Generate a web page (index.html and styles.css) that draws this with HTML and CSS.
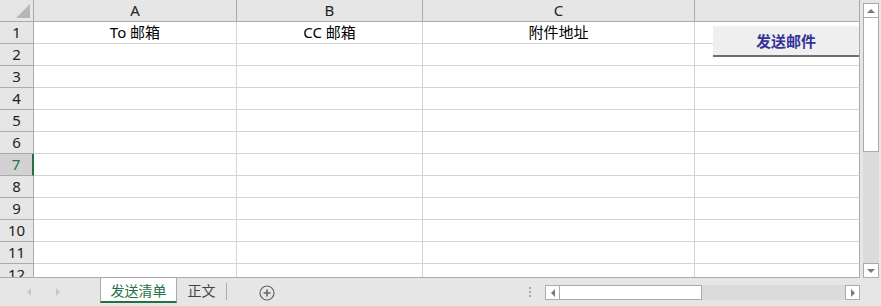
FILE: index.html
```html
<!DOCTYPE html>
<html lang="zh-CN">

<head>
  <meta charset="UTF-8" />
  <title>发送清单</title>
  <link rel="stylesheet" href="styles.css">
</head>

<body>
  <div class="workbook">
    <div class="top">
      <div class="sheet">
        <div class="grid">
          <div class="corner"><span class="tri"></span></div>
          <div class="colhead">A</div>
          <div class="colhead">B</div>
          <div class="colhead">C</div>
          <div class="colhead last"></div>

          <div class="rowhead">1</div>
          <div class="cell">To 邮箱</div>
          <div class="cell">CC 邮箱</div>
          <div class="cell">附件地址</div>
          <div class="cell last"></div>

          <div class="rowhead">2</div><div class="cell"></div><div class="cell"></div><div class="cell"></div><div class="cell last"></div>
          <div class="rowhead">3</div><div class="cell"></div><div class="cell"></div><div class="cell"></div><div class="cell last"></div>
          <div class="rowhead">4</div><div class="cell"></div><div class="cell"></div><div class="cell"></div><div class="cell last"></div>
          <div class="rowhead">5</div><div class="cell"></div><div class="cell"></div><div class="cell"></div><div class="cell last"></div>
          <div class="rowhead">6</div><div class="cell"></div><div class="cell"></div><div class="cell"></div><div class="cell last"></div>
          <div class="rowhead selected">7</div><div class="cell"></div><div class="cell"></div><div class="cell"></div><div class="cell last"></div>
          <div class="rowhead">8</div><div class="cell"></div><div class="cell"></div><div class="cell"></div><div class="cell last"></div>
          <div class="rowhead">9</div><div class="cell"></div><div class="cell"></div><div class="cell"></div><div class="cell last"></div>
          <div class="rowhead">10</div><div class="cell"></div><div class="cell"></div><div class="cell"></div><div class="cell last"></div>
          <div class="rowhead">11</div><div class="cell"></div><div class="cell"></div><div class="cell"></div><div class="cell last"></div>
          <div class="rowhead">12</div><div class="cell"></div><div class="cell"></div><div class="cell"></div><div class="cell last"></div>
        </div>
        <!-- macro button shape floating over D1:D2 -->
        <button class="macro-btn" type="button">发送邮件</button>
      </div>

      <div class="vscroll">
        <div class="sb-btn"><span class="caret up"></span></div>
        <div class="sb-thumb-v"></div>
        <div class="sb-track-v"></div>
        <div class="sb-btn"><span class="caret down"></span></div>
      </div>
    </div>

    <div class="bottom">
      <div class="tab-nav">
        <span class="nav-arrow left"></span>
        <span class="nav-arrow right"></span>
      </div>
      <div class="tab active">发送清单</div>
      <div class="tab">正文</div>
      <div class="tab-sep"></div>
      <div class="add-sheet">
        <svg width="16" height="16" viewBox="0 0 16 16">
          <circle cx="8" cy="8" r="7" fill="none" stroke="#666" stroke-width="1.2" />
          <path d="M8 4.5v7M4.5 8h7" stroke="#666" stroke-width="1.6" />
        </svg>
      </div>
      <div class="dots"><span></span><span></span><span></span></div>
      <div class="hscroll">
        <div class="sb-btn"><span class="caret left"></span></div>
        <div class="sb-thumb-h"></div>
        <div class="sb-track-h"></div>
        <div class="sb-btn"><span class="caret right"></span></div>
      </div>
    </div>
  </div>
</body>

</html>
```

FILE: styles.css
```css
html,
body {
  margin: 0;
  padding: 0;
}

body {
  width: 881px;
  height: 306px;
  overflow: hidden;
  background-color: #e6e6e6;
  font-family: "Noto Sans", "Noto Sans CJK SC", sans-serif;
  color: #000;
}

.workbook {
  display: flex;
  flex-direction: column;
  width: 881px;
  height: 306px;
}

.top {
  display: flex;
  height: 278px;
}

.sheet {
  position: relative;
  width: 860px;
  height: 277px;
  overflow: hidden;
  background-color: #fff;
  border-bottom: 1px solid #ababab;
}

.grid {
  display: grid;
  grid-template-columns: 34px 203px 186px 272px 165px;
  grid-auto-rows: 22px;
}

.grid > div {
  box-sizing: border-box;
  border-right: 1px solid #d4d4d4;
  border-bottom: 1px solid #d4d4d4;
  display: flex;
  align-items: center;
  justify-content: center;
  font-size: 15px;
  line-height: 1;
}

.corner {
  position: relative;
  background-color: #e6e6e6;
  border-right-color: #ababab !important;
  border-bottom-color: #ababab !important;
}

.corner .tri {
  position: absolute;
  right: 3px;
  bottom: 3px;
  width: 0;
  height: 0;
  border-left: 14px solid transparent;
  border-bottom: 14px solid #b6b6b6;
}

.colhead {
  background-color: #e6e6e6;
  border-bottom-color: #ababab !important;
  border-right-color: #ababab !important;
  color: #222;
}

.rowhead {
  background-color: #e6e6e6;
  border-right-color: #ababab !important;
  border-bottom-color: #ababab !important;
  color: #222;
}

.rowhead.selected {
  background-color: #d2d2d2;
  color: #217346;
  border-right: 2px solid #217346 !important;
}

.grid > .last {
  border-right-color: #ababab;
}

.cell {
  color: #000;
  padding-bottom: 1px;
}

/* Button shape sitting on top of the grid */
.macro-btn {
  position: absolute;
  left: 713px;
  top: 26px;
  width: 146px;
  height: 31px;
  margin: 0;
  padding: 0;
  border: none;
  border-bottom: 2px solid #6e6e6e;
  background-color: #efefef;
  color: #333399;
  font-family: "Noto Sans CJK SC", sans-serif;
  font-weight: bold;
  font-size: 15px;
  cursor: pointer;
}

/* scroll bars */
.vscroll {
  display: flex;
  flex-direction: column;
  margin: 3px 0 0 3px;
  width: 16px;
}

.sb-btn {
  box-sizing: border-box;
  width: 16px;
  height: 15px;
  background-color: #fff;
  border: 1px solid #ababab;
  display: flex;
  align-items: center;
  justify-content: center;
  flex: none;
}

.sb-thumb-v {
  box-sizing: border-box;
  height: 134px;
  background-color: #fff;
  border: 1px solid #ababab;
  border-top: none;
}

.sb-track-v {
  flex: 1;
  background-color: #dbdbdb;
}

.caret {
  width: 0;
  height: 0;
}

.caret.up {
  border-left: 4px solid transparent;
  border-right: 4px solid transparent;
  border-bottom: 4px solid #7a7a7a;
}

.caret.down {
  border-left: 4px solid transparent;
  border-right: 4px solid transparent;
  border-top: 4px solid #7a7a7a;
}

.caret.left {
  border-top: 4px solid transparent;
  border-bottom: 4px solid transparent;
  border-right: 4px solid #7a7a7a;
}

.caret.right {
  border-top: 4px solid transparent;
  border-bottom: 4px solid transparent;
  border-left: 4px solid #7a7a7a;
}

.bottom {
  display: flex;
  align-items: flex-start;
  height: 28px;
}

.tab-nav {
  display: flex;
  width: 100px;
  padding-top: 10px;
}

.nav-arrow {
  width: 0;
  height: 0;
  border-top: 4px solid transparent;
  border-bottom: 4px solid transparent;
}

.nav-arrow.left {
  margin-left: 27px;
  border-right: 4px solid #c8c8c8;
}

.nav-arrow.right {
  margin-left: 25px;
  border-left: 4px solid #c8c8c8;
}

.tab {
  box-sizing: border-box;
  height: 25px;
  padding: 3px 0 0;
  font-family: "Noto Sans CJK SC", sans-serif;
  font-size: 14px;
  line-height: 18px;
  text-align: center;
  color: #444;
}

.tab.active {
  width: 77px;
  background-color: #fff;
  color: #217346;
  border-left: 1px solid #ababab;
  border-right: 1px solid #ababab;
  border-bottom: 2px solid #217346;
}

.tab:not(.active) {
  width: 49px;
}

.tab-sep {
  width: 1px;
  height: 17px;
  margin-top: 5px;
  background-color: #ababab;
}

.add-sheet {
  margin: 6px 0 0 32px;
  width: 16px;
  height: 16px;
}

.dots {
  display: flex;
  flex-direction: column;
  gap: 2px;
  margin: 9px 0 0 254px;
}

.dots span {
  width: 2px;
  height: 2px;
  background-color: #a8a8a8;
}

.hscroll {
  display: flex;
  margin: 7px 0 0 14px;
  width: 315px;
  height: 15px;
}

.hscroll .sb-btn {
  width: 15px;
}

.sb-thumb-h {
  box-sizing: border-box;
  width: 142px;
  background-color: #fff;
  border: 1px solid #ababab;
  border-left: none;
}

.sb-track-h {
  flex: 1;
  background-color: #dbdbdb;
}
```
